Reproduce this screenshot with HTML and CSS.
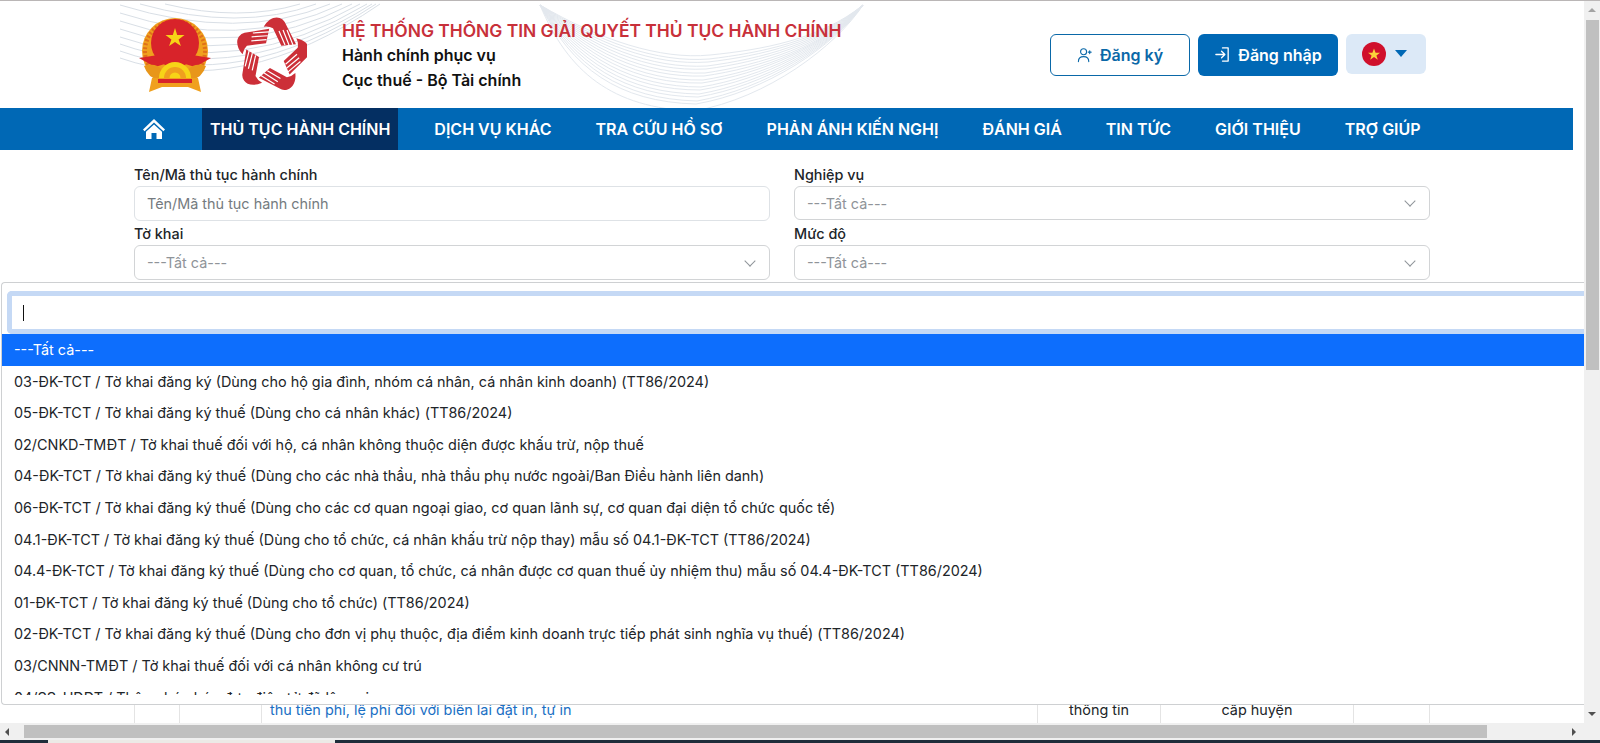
FILE: index.html
```html
<!DOCTYPE html>
<html lang="vi">
<head>
  <meta charset="UTF-8">
  <title>Hệ thống thông tin giải quyết thủ tục hành chính</title>
  <link rel="stylesheet" href="styles.css">
</head>
<body>

<div class="window">
  <div class="page">

    <div class="header">
      <svg class="header-waves" width="1584" height="107" viewBox="0 1 1584 107" fill="none">
        <g stroke="#d9dfe6" stroke-width="1">
          <path d="M165 4Q240 22 300 4"/>
          <path d="M140 4Q240 32 316 4"/>
          <path d="M120 5Q240 42 330 4"/>
          <path d="M120 13Q240 52 342 4"/>
          <path d="M120 21Q240 62 352 4"/>
          <path d="M120 29Q240 72 360 4"/>
          <path d="M120 37Q240 80 367 4"/>
          <path d="M120 44Q240 87 372 4"/>
          <path d="M120 51Q240 94 376 4"/>
          <path d="M120 58Q240 100 380 4"/>
        </g>
        <g stroke="#e3e8ee" stroke-width="1">
          <path d="M540 5C600 40 660 60 710 55C760 50 820 40 863 5"/>
          <path d="M540 5C598 42 657 63 709 59C760 53 821 41 863 5"/>
          <path d="M540 5C596 44 654 66 708 62C760 56 822 42 863 5"/>
          <path d="M540 5C594 46 651 69 707 66C760 59 823 43 863 5"/>
          <path d="M540 5C592 48 648 72 706 69C760 62 824 44 863 5"/>
          <path d="M540 5C590 50 645 75 705 73C760 65 825 45 863 5"/>
          <path d="M540 5C588 52 642 78 704 76C760 68 826 46 863 5"/>
          <path d="M540 5C586 54 639 81 703 80C760 71 827 46 863 5"/>
          <path d="M540 5C584 56 636 84 702 83C760 74 828 46 863 5"/>
          <path d="M540 5C582 58 633 87 701 87C761 77 829 46 863 5"/>
          <path d="M540 5C580 60 630 90 700 90C762 80 830 46 863 5"/>
          <path d="M540 5C578 62 627 93 699 94C763 83 831 46 863 5"/>
          <path d="M540 5C576 64 624 96 698 97C764 86 832 46 863 5"/>
          <path d="M540 5C574 66 621 99 697 101C765 89 833 46 863 5"/>
          <path d="M540 5C572 68 618 102 696 104C766 92 834 46 863 5"/>
          <path d="M540 5C568 72 612 108 694 111C768 98 836 46 863 5"/>
        </g>
      </svg>

      <svg class="logo" width="74" height="74" viewBox="0 0 74 74">
        <circle cx="37" cy="33" r="33" fill="#f0a01e"/>
        <circle cx="37" cy="33" r="30" fill="none" stroke="#e0701a" stroke-width="4" stroke-dasharray="2 2"/>
        <circle cx="37" cy="25" r="24" fill="#d8232a"/>
        <path d="M37 10l2.200 7h7.300l-5.900 4.400 2.300 6.700-5.900-4.100-5.900 4.100 2.300-6.700-5.900-4.400h7.300z" fill="#f7d417"/>
        <path d="M1 40l19-3 10 8-13 4zM73 40l-19-3-10 8 13 4z" fill="#d8232a"/>
        <path d="M6 48Q18 44 24 52L21 62Q10 60 6 48zM68 48Q56 44 50 52L53 62Q64 60 68 48z" fill="#e8961a"/>
        <path d="M21 60a16 16 0 0 1 32 0z" fill="#f7d417"/>
        <path d="M26 60a11 11 0 0 1 22 0z" fill="#f0a01e"/>
        <path d="M31.500 60a5.500 5.500 0 0 1 11 0z" fill="#f7d417"/>
        <path d="M14 60H60L63 74 50 69H24L11 74z" fill="#f0a01e"/>
        <path d="M20 61H54V65H20z" fill="#d8232a"/>
      </svg>

      <svg class="logo logo-hands" width="70" height="74" viewBox="-35 -38 70 74">
        <defs>
          <g id="hand">
            <path d="M-8.300 -28.300C-4 -36 3 -39 7.700 -37Q11 -36 12.700 -33L24 -10.700 9.300 -9.300 1 -26.700Q-3 -29 -8.300 -28.300Z" fill="#cc2f38"/>
            <path d="M13 -10L7 -24M17 -10L11 -25M21 -10L15 -25" stroke="#fff" stroke-width="1.200" fill="none"/>
          </g>
        </defs>
        <use href="#hand"/>
        <use href="#hand" transform="rotate(72)"/>
        <use href="#hand" transform="rotate(144)"/>
        <use href="#hand" transform="rotate(216)"/>
        <use href="#hand" transform="rotate(288)"/>
      </svg>

      <div class="brand">
        <div class="brand-title">HỆ THỐNG THÔNG TIN GIẢI QUYẾT THỦ TỤC HÀNH CHÍNH</div>
        <div class="brand-line">Hành chính phục vụ</div>
        <div class="brand-line">Cục thuế - Bộ Tài chính</div>
      </div>

      <div class="auth">
        <a class="btn btn-outline" href="#">
          <svg width="16" height="16" viewBox="0 0 17 17" fill="none" stroke="currentColor" stroke-width="1.200" stroke-linecap="round">
            <circle cx="7" cy="5" r="3.200"/>
            <path d="M1.500 15.500C1.500 11.500 4 10.200 7 10.200S12.500 11.500 12.500 15.500"/>
            <path d="M13.500 4v3M12 5.500h3"/>
          </svg>
          Đăng ký
        </a>
        <a class="btn btn-solid" href="#">
          <svg width="17" height="17" viewBox="0 0 18 18" fill="none" stroke="currentColor" stroke-width="1.400" stroke-linecap="round" stroke-linejoin="round">
            <path d="M9 2H15V16H9"/>
            <path d="M2 9H11M8 5.500L11.500 9 8 12.500"/>
          </svg>
          Đăng nhập
        </a>
        <div class="lang">
          <svg width="24" height="24" viewBox="0 0 24 24">
            <circle cx="12" cy="12" r="12" fill="#d0102c"/>
            <path d="M12 6.500l1.600 4.200h4.400l-3.600 2.700 1.400 4.400-3.800-2.700-3.800 2.700 1.400-4.400-3.600-2.700h4.400z" fill="#fbd23a"/>
          </svg>
          <span class="caret"></span>
        </div>
      </div>
    </div>

    <div class="nav">
      <a class="nav-item nav-home" href="#">
        <svg width="22" height="20" viewBox="0 0 22 20" fill="#fff">
          <path d="M11 0L22 10.500 20.400 12.200 11 3.400 1.600 12.200 0 10.500z"/>
          <path d="M11 5.400L19 12.800V20H13.500V14H8.500V20H3V12.800z"/>
        </svg>
      </a>
      <a class="nav-item active" href="#">THỦ TỤC HÀNH CHÍNH</a>
      <a class="nav-item" href="#">DỊCH VỤ KHÁC</a>
      <a class="nav-item" href="#">TRA CỨU HỒ SƠ</a>
      <a class="nav-item" href="#">PHẢN ÁNH KIẾN NGHỊ</a>
      <a class="nav-item" href="#">ĐÁNH GIÁ</a>
      <a class="nav-item" href="#">TIN TỨC</a>
      <a class="nav-item" href="#">GIỚI THIỆU</a>
      <a class="nav-item" href="#">TRỢ GIÚP</a>
    </div>

    <div class="filters">
      <div class="field">
        <label>Tên/Mã thủ tục hành chính</label>
        <div class="input">Tên/Mã thủ tục hành chính</div>
      </div>
      <div class="field">
        <label>Nghiệp vụ</label>
        <div class="input select">---Tất cả---<span class="chevron"></span></div>
      </div>
      <div class="field">
        <label>Tờ khai</label>
        <div class="input select">---Tất cả---<span class="chevron"></span></div>
      </div>
      <div class="field">
        <label>Mức độ</label>
        <div class="input select">---Tất cả---<span class="chevron"></span></div>
      </div>
    </div>

    <div class="results">
      <table class="result-table">
        <colgroup>
          <col class="col-a"><col class="col-b"><col class="col-name"><col class="col-c"><col class="col-d"><col class="col-e"><col class="col-f">
        </colgroup>
        <tr>
          <td></td>
          <td></td>
          <td class="link">thu tiền phí, lệ phí đối với biên lai đặt in, tự in</td>
          <td class="center">thông tin</td>
          <td class="center">cấp huyện</td>
          <td></td>
          <td></td>
        </tr>
      </table>
    </div>

    <div class="dropdown">
      <div class="dropdown-search"><span class="text-cursor"></span></div>
      <ul class="dropdown-list">
        <li class="selected">---Tất cả---</li>
        <li>03-ĐK-TCT / Tờ khai đăng ký (Dùng cho hộ gia đình, nhóm cá nhân, cá nhân kinh doanh) (TT86/2024)</li>
        <li>05-ĐK-TCT / Tờ khai đăng ký thuế (Dùng cho cá nhân khác) (TT86/2024)</li>
        <li>02/CNKD-TMĐT / Tờ khai thuế đối với hộ, cá nhân không thuộc diện được khấu trừ, nộp thuế</li>
        <li>04-ĐK-TCT / Tờ khai đăng ký thuế (Dùng cho các nhà thầu, nhà thầu phụ nước ngoài/Ban Điều hành liên danh)</li>
        <li>06-ĐK-TCT / Tờ khai đăng ký thuế (Dùng cho các cơ quan ngoại giao, cơ quan lãnh sự, cơ quan đại diện tổ chức quốc tế)</li>
        <li>04.1-ĐK-TCT / Tờ khai đăng ký thuế (Dùng cho tổ chức, cá nhân khấu trừ nộp thay) mẫu số 04.1-ĐK-TCT (TT86/2024)</li>
        <li>04.4-ĐK-TCT / Tờ khai đăng ký thuế (Dùng cho cơ quan, tổ chức, cá nhân được cơ quan thuế ủy nhiệm thu) mẫu số 04.4-ĐK-TCT (TT86/2024)</li>
        <li>01-ĐK-TCT / Tờ khai đăng ký thuế (Dùng cho tổ chức) (TT86/2024)</li>
        <li>02-ĐK-TCT / Tờ khai đăng ký thuế (Dùng cho đơn vị phụ thuộc, địa điểm kinh doanh trực tiếp phát sinh nghĩa vụ thuế) (TT86/2024)</li>
        <li>03/CNNN-TMĐT / Tờ khai thuế đối với cá nhân không cư trú</li>
        <li>04/SS-HDDT / Thông báo hóa đơn điện tử đã lập sai</li>
      </ul>
    </div>
  </div>

  <div class="vscroll">
    <span class="arrow arrow-up"></span>
    <div class="vscroll-thumb"></div>
    <span class="arrow arrow-down"></span>
  </div>

  <div class="hscroll">
    <span class="arrow arrow-left"></span>
    <div class="hscroll-thumb"></div>
    <span class="arrow arrow-right"></span>
  </div>
  <div class="scroll-corner"></div>

  <div class="taskbar">
    <div class="taskbar-tab"></div>
  </div>
</div>

</body>
</html>
```

FILE: styles.css
```css
html, body {
  margin: 0;
  height: 100%;
  overflow: hidden;
}

body {
  font-family: Inter, "Noto Sans", sans-serif;
  font-size: 14.4px;
  color: #212529;
  background: #fff;
}

a {
  text-decoration: none;
}

.window {
  height: 100vh;
  display: grid;
  grid-template-columns: 1fr 16px;
  grid-template-rows: 1fr 17px 3px;
  border-top: 1px solid #bab6b6;
  box-sizing: border-box;
}

.page {
  position: relative;
  display: flex;
  flex-direction: column;
  overflow: hidden;
  min-width: 0;
}

/* header */
.header {
  position: relative;
  height: 107px;
  flex: none;
  display: flex;
  align-items: center;
  padding: 0 158px 0 138px;
}

.header-waves {
  position: absolute;
  top: 0;
  left: 0;
}

.logo {
  position: relative;
  flex: none;
}

.logo-hands {
  margin-left: 25px;
  margin-top: -2px;
}

.brand {
  position: relative;
  margin-left: 35px;
  margin-top: 1px;
  font-weight: 600;
}

.brand-title {
  font-size: 17.4px;
  line-height: 25px;
  color: #c8303a;
}

.brand-line {
  font-size: 16px;
  line-height: 24.5px;
  color: #111;
}

.auth {
  position: relative;
  margin-left: auto;
  display: flex;
  align-items: flex-start;
  gap: 8px;
}

.btn {
  width: 140px;
  height: 42px;
  box-sizing: border-box;
  border-radius: 6px;
  display: flex;
  align-items: center;
  justify-content: center;
  gap: 7px;
  font-size: 16px;
  font-weight: 600;
}

.btn-outline {
  border: 1px solid #0a68a8;
  color: #0a68a8;
  background: #fff;
}

.btn-solid {
  background: #0068b5;
  color: #fff;
}

.lang {
  width: 80px;
  height: 40px;
  border-radius: 6px;
  background: #dce9f7;
  display: flex;
  align-items: center;
  padding-left: 16px;
  box-sizing: border-box;
  gap: 9px;
}

.caret {
  width: 0;
  height: 0;
  border-left: 6.5px solid transparent;
  border-right: 6.5px solid transparent;
  border-top: 7px solid #0068b5;
}

/* menu */
.nav {
  flex: none;
  width: 1573px;
  height: 42px;
  box-sizing: border-box;
  background: #0068b5;
  display: flex;
  gap: 28px;
  padding-left: 135px;
}

.nav-item {
  display: flex;
  align-items: center;
  padding: 0 8px;
  color: #fff;
  font-size: 16px;
  font-weight: 600;
  white-space: nowrap;
}

.nav-home {
  margin-right: 1px;
}

.nav-item.active {
  background: #042f62;
}

/* filter form */
.filters {
  flex: none;
  display: grid;
  grid-template-columns: 636px 636px;
  column-gap: 24px;
  padding: 14px 0 0 134px;
}

.field label {
  display: block;
  height: 22px;
  line-height: 22px;
  font-weight: 500;
}

.field:nth-child(n+3) label {
  height: 24px;
  line-height: 25px;
}

.input {
  height: 35px;
  box-sizing: border-box;
  border: 1px solid #dee2e6;
  border-radius: 6px;
  padding: 0 12px;
  display: flex;
  align-items: center;
  color: #757b80;
}

.field:nth-child(2) .input {
  height: 34px;
}

.select {
  border-color: #d2d4d6;
  justify-content: space-between;
  color: #8f9499;
}

.chevron {
  width: 7px;
  height: 7px;
  margin: -4px 3px 0 0;
  border-right: 1.5px solid #8f9499;
  border-bottom: 1.5px solid #8f9499;
  transform: rotate(45deg);
}

/* list behind the open dropdown */
.results {
  flex: 1;
  min-height: 0;
  display: flex;
  align-items: flex-end;
}

.result-table {
  margin-left: 134px;
  width: 1296px;
  table-layout: fixed;
  border-collapse: collapse;
}

.col-a { width: 45px; }
.col-b { width: 82px; }
.col-name { width: 776px; }
.col-c { width: 123px; }
.col-d { width: 193px; }
.col-e { width: 76px; }
.col-f { width: 1px; }

.result-table td {
  height: 24px;
  padding: 0 8px 3px;
  box-sizing: border-box;
  border-left: 1px solid #e4e4e4;
  line-height: 21px;
  white-space: nowrap;
  overflow: hidden;
}

.result-table .link {
  color: #1a6fc4;
}

.result-table .center {
  text-align: center;
}

/* open select dropdown */
.dropdown {
  position: absolute;
  top: 281px;
  left: 1px;
  right: 0;
  height: 423px;
  box-sizing: border-box;
  background: #fff;
  border: 1px solid #ced0d2;
  border-right: none;
  border-radius: 4px 0 0 4px;
  overflow: hidden;
}

.dropdown-search {
  height: 43px;
  margin: 8px 0 0 5px;
  box-sizing: border-box;
  border: 5px solid #c5d9f5;
  border-right: none;
  border-radius: 5px 0 0 5px;
  padding: 9px 0 0 11px;
}

.text-cursor {
  display: block;
  width: 1px;
  height: 16px;
  background: #111;
}

.dropdown-list {
  list-style: none;
  margin: 0;
  padding: 0;
  max-height: 361px;
  overflow: hidden;
}

.dropdown-list li {
  padding: 5px 12px;
  line-height: 21.6px;
  white-space: nowrap;
}

.dropdown-list .selected {
  background: #0d6efd;
  color: #fff;
}

/* window scrollbars */
.vscroll {
  grid-row: 1;
  grid-column: 2;
  background: #f0f0f0;
  display: flex;
  flex-direction: column;
  align-items: center;
}

.vscroll-thumb {
  width: 13px;
  height: 350px;
  margin-top: 8px;
  background: #c0c0c0;
}

.hscroll {
  grid-row: 2;
  grid-column: 1;
  background: #f0f0f0;
  display: flex;
  align-items: center;
  padding: 0 5px;
}

.hscroll-thumb {
  width: 1463px;
  height: 13px;
  margin-left: 15px;
  background: #c0c0c0;
}

.scroll-corner {
  grid-row: 2;
  grid-column: 2;
  background: #f0f0f0;
}

.arrow {
  width: 0;
  height: 0;
  flex: none;
}

.arrow-up {
  margin-top: 7px;
  border-left: 4px solid transparent;
  border-right: 4px solid transparent;
  border-bottom: 4px solid #a3a3a3;
}

.arrow-down {
  margin-top: auto;
  margin-bottom: 7px;
  border-left: 4px solid transparent;
  border-right: 4px solid transparent;
  border-top: 4px solid #505050;
}

.arrow-left {
  border-top: 4px solid transparent;
  border-bottom: 4px solid transparent;
  border-right: 4px solid #505050;
}

.arrow-right {
  margin-left: 85px;
  border-top: 4px solid transparent;
  border-bottom: 4px solid transparent;
  border-left: 4px solid #505050;
}

.taskbar {
  grid-row: 3;
  grid-column: 1 / 3;
  background: #1f2d3a;
  padding-left: 48px;
}

.taskbar-tab {
  width: 287px;
  height: 3px;
  background: #eceae6;
}
```
